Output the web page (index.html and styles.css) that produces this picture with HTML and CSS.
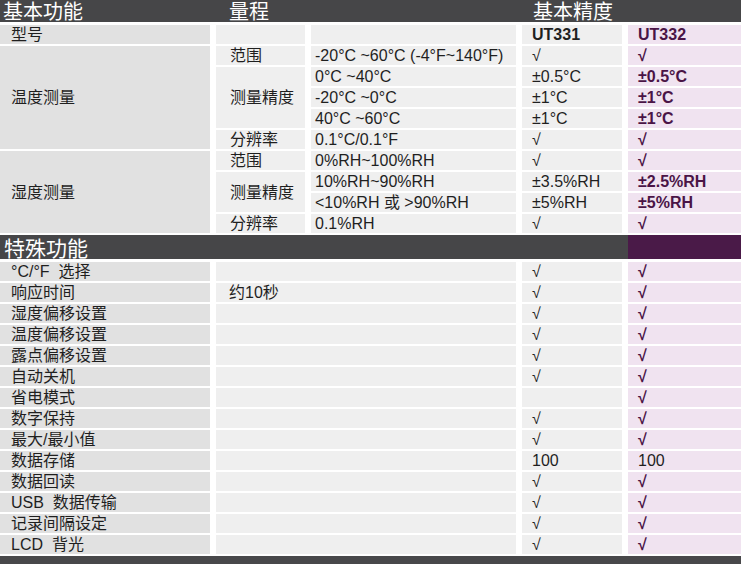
FILE: index.html
```html
<!DOCTYPE html>
<html lang="zh">
<head>
<meta charset="utf-8">
<title>UT331 / UT332 功能对比</title>
<link rel="stylesheet" href="styles.css">
</head>
<body>
<div class="sheet">
  <div class="band band-head">
    <div class="bh bh1">基本功能</div>
    <div class="bh bh2">量程</div>
    <div class="bh bh3">基本精度</div>
  </div>

  <div class="grid grid-top">
    <div class="cell c1">型号</div>
    <div class="cell"></div>
    <div class="cell"></div>
    <div class="cell c4 b">UT331</div>
    <div class="cell pu b">UT332</div>

    <div class="cell c1 r5">温度测量</div>
    <div class="cell c2">范围</div>
    <div class="cell c3">-20°C ~60°C (-4°F~140°F)</div>
    <div class="cell c4">√</div>
    <div class="cell pu ck">√</div>

    <div class="cell c2 r3">测量精度</div>
    <div class="cell c3">0°C ~40°C</div>
    <div class="cell c4">±0.5°C</div>
    <div class="cell pu b">±0.5°C</div>

    <div class="cell c3">-20°C ~0°C</div>
    <div class="cell c4">±1°C</div>
    <div class="cell pu b">±1°C</div>

    <div class="cell c3">40°C ~60°C</div>
    <div class="cell c4">±1°C</div>
    <div class="cell pu b">±1°C</div>

    <div class="cell c2">分辨率</div>
    <div class="cell c3">0.1°C/0.1°F</div>
    <div class="cell c4">√</div>
    <div class="cell pu ck">√</div>

    <div class="cell c1 r4">湿度测量</div>
    <div class="cell c2">范围</div>
    <div class="cell c3">0%RH~100%RH</div>
    <div class="cell c4">√</div>
    <div class="cell pu ck">√</div>

    <div class="cell c2 r2">测量精度</div>
    <div class="cell c3">10%RH~90%RH</div>
    <div class="cell c4">±3.5%RH</div>
    <div class="cell pu b">±2.5%RH</div>

    <div class="cell c3">&lt;10%RH 或 &gt;90%RH</div>
    <div class="cell c4">±5%RH</div>
    <div class="cell pu b">±5%RH</div>

    <div class="cell c2">分辨率</div>
    <div class="cell c3">0.1%RH</div>
    <div class="cell c4">√</div>
    <div class="cell pu ck">√</div>
  </div>

  <div class="band band-special">
    <div class="bs-main">特殊功能</div>
    <div class="bs-pu"></div>
  </div>

  <div class="grid grid-bottom">
    <div class="cell c1">°C/°F&nbsp; 选择</div>
    <div class="cell c23"></div>
    <div class="cell c4">√</div>
    <div class="cell pu ck">√</div>

    <div class="cell c1">响应时间</div>
    <div class="cell c23">约10秒</div>
    <div class="cell c4">√</div>
    <div class="cell pu ck">√</div>

    <div class="cell c1">湿度偏移设置</div>
    <div class="cell c23"></div>
    <div class="cell c4">√</div>
    <div class="cell pu ck">√</div>

    <div class="cell c1">温度偏移设置</div>
    <div class="cell c23"></div>
    <div class="cell c4">√</div>
    <div class="cell pu ck">√</div>

    <div class="cell c1">露点偏移设置</div>
    <div class="cell c23"></div>
    <div class="cell c4">√</div>
    <div class="cell pu ck">√</div>

    <div class="cell c1">自动关机</div>
    <div class="cell c23"></div>
    <div class="cell c4">√</div>
    <div class="cell pu ck">√</div>

    <div class="cell c1">省电模式</div>
    <div class="cell c23"></div>
    <div class="cell c4"></div>
    <div class="cell pu ck">√</div>

    <div class="cell c1">数字保持</div>
    <div class="cell c23"></div>
    <div class="cell c4">√</div>
    <div class="cell pu ck">√</div>

    <div class="cell c1">最大/最小值</div>
    <div class="cell c23"></div>
    <div class="cell c4">√</div>
    <div class="cell pu ck">√</div>

    <div class="cell c1">数据存储</div>
    <div class="cell c23"></div>
    <div class="cell c4">100</div>
    <div class="cell pu num">100</div>

    <div class="cell c1">数据回读</div>
    <div class="cell c23"></div>
    <div class="cell c4">√</div>
    <div class="cell pu ck">√</div>

    <div class="cell c1">USB&nbsp; 数据传输</div>
    <div class="cell c23"></div>
    <div class="cell c4">√</div>
    <div class="cell pu ck">√</div>

    <div class="cell c1">记录间隔设定</div>
    <div class="cell c23"></div>
    <div class="cell c4">√</div>
    <div class="cell pu ck">√</div>

    <div class="cell c1">LCD&nbsp; 背光</div>
    <div class="cell c23"></div>
    <div class="cell c4">√</div>
    <div class="cell pu ck">√</div>
  </div>

  <div class="band band-foot"></div>
</div>
</body>
</html>
```

FILE: styles.css
```css
html, body {
  margin: 0;
  padding: 0;
  background: #ffffff;
}

.sheet {
  width: 741px;
  height: 564px;
  overflow: hidden;
  font-family: "Liberation Sans", "Noto Sans CJK SC", sans-serif;
  font-size: 16px;
  color: #1f1f1f;
}

.band-head {
  display: grid;
  grid-template-columns: 210px 89px 205px 100px 113px;
  column-gap: 6px;
  height: 22px;
  background: #464648;
  color: #ffffff;
  font-family: "Noto Sans CJK SC", "Liberation Sans", sans-serif;
  font-size: 20px;
  line-height: 22px;
}

.bh {
  white-space: nowrap;
}

.bh1 {
  padding-left: 3px;
}

.bh2 {
  grid-column: span 2;
  padding-left: 13px;
}

.bh3 {
  grid-column: span 2;
  padding-left: 11px;
}

.grid {
  display: grid;
  grid-template-columns: 210px 89px 205px 100px 113px;
  column-gap: 6px;
  row-gap: 2px;
  grid-auto-rows: 19px;
}

.grid-top {
  margin-top: 3px;
}

.grid-bottom {
  margin-top: 3px;
}

.cell {
  display: flex;
  align-items: center;
  background: #efefef;
  line-height: 19px;
  white-space: nowrap;
  overflow: hidden;
}

.c1 {
  background: #e1e1e1;
  padding-left: 11px;
}

.c2 {
  padding-left: 14px;
}

.c3 {
  padding-left: 4px;
}

.c23 {
  grid-column: span 2;
  padding-left: 13px;
}

.c4 {
  padding-left: 10px;
}

.pu {
  background: #f0e3f0;
  color: #4a1446;
  padding-left: 10px;
}

.b {
  font-weight: bold;
}

.ck {
  font-weight: bold;
}

.num {
  color: #1f1f1f;
}

.r2 { grid-row: span 2; }
.r3 { grid-row: span 3; }
.r4 { grid-row: span 4; }
.r5 { grid-row: span 5; }

.band-special {
  display: flex;
  margin-top: 2px;
  height: 24px;
  background: #464648;
}

.bs-main {
  flex: 1;
  color: #ffffff;
  font-family: "Noto Sans CJK SC", "Liberation Sans", sans-serif;
  font-size: 21px;
  line-height: 24px;
  padding-left: 4px;
}

.bs-pu {
  width: 113px;
  background: #4a1a48;
}

.band-foot {
  margin-top: 2px;
  height: 8px;
  background: #48484a;
}
```
